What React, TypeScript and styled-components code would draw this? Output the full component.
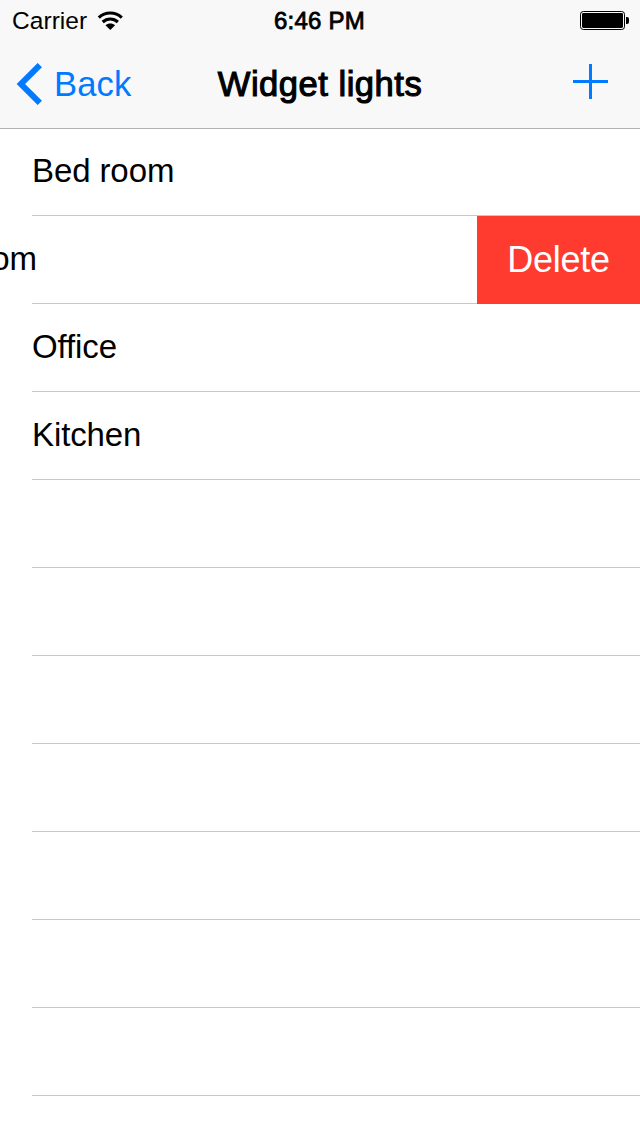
import React from 'react';
import styled, { createGlobalStyle } from 'styled-components';

const GlobalStyle = createGlobalStyle`
  * { box-sizing: border-box; }
  body {
    margin: 0;
    background: #fff;
    color: #000;
    font-family: "Liberation Sans", Arial, sans-serif;
  }
`;

const Screen = styled.div`
  width: 640px;
  height: 1136px;
  overflow: hidden;
  background: #fff;
`;

const Header = styled.header`
  position: relative;
  z-index: 1;
  height: 129px;
  background: #f8f8f8;
  border-bottom: 1px solid #b2b2b2;
`;

const StatusBar = styled.div`
  display: grid;
  grid-template-columns: 1fr auto 1fr;
  align-items: center;
  height: 40px;
  padding: 0 11px 0 12px;
  font-size: 24px;
  line-height: 40px;
`;

const Carrier = styled.div`
  display: flex;
  align-items: center;
  gap: 10px;
  font-size: 24.5px;
  letter-spacing: 0.05px;
  padding-top: 1px;
`;

const Clock = styled.div`
  padding: 1px 2px 0 0;
  letter-spacing: 0.25px;
  -webkit-text-stroke: 0.8px #000;
`;

const BatterySlot = styled.div`
  display: flex;
  justify-content: flex-end;
`;

const NavBar = styled.nav`
  display: grid;
  grid-template-columns: 1fr auto 1fr;
  align-items: center;
  height: 88px;
  padding: 0 32px;
`;

const BackButton = styled.a`
  display: flex;
  align-items: center;
  gap: 11px;
  margin-left: -16px;
  color: #007aff;
  font-size: 34.6px;
  letter-spacing: 0.1px;
`;

const Title = styled.h1`
  margin: 0;
  font-size: 34.6px;
  font-weight: 400;
  letter-spacing: 0.5px;
  -webkit-text-stroke: 1.1px #000;
`;

const AddButton = styled.a`
  display: flex;
  justify-content: flex-end;
  padding-bottom: 6px;
`;

const List = styled.main`
  margin-top: -1px;
`;

const Row = styled.div`
  display: flex;
  height: 88px;
  padding-left: 32px;
  overflow: hidden;
`;

const Cell = styled.div<{ $shift?: number }>`
  flex: 1;
  min-width: 0;
  border-bottom: 1px solid #c8c7cc;
  font-size: 33px;
  line-height: 86px;
  letter-spacing: -0.1px;
  white-space: nowrap;
  text-indent: ${({ $shift = 0 }) => -$shift}px;
`;

const DeleteButton = styled.div`
  width: 163px;
  height: 88px;
  background: #ff3b30;
  color: #fff;
  font-size: 36px;
  line-height: 88px;
  text-align: center;
  letter-spacing: -0.25px;
`;

const WifiIcon = () => (
  <svg width="26" height="20" viewBox="0 0 26 20" fill="none" stroke="#000">
    <path d="M1.8 6.6C8.3 .4 18.3 .4 24.8 6.6" strokeWidth="3.1" />
    <path d="M5.7 11C10.1 7 16.5 7 20.9 11" strokeWidth="3.1" />
    <path d="M13.3 19 8.5 14.3c2.6-2.4 7-2.4 9.6 0z" fill="#000" stroke="none" />
  </svg>
);

const BatteryIcon = () => (
  <svg width="49" height="19" viewBox="0 0 49 19">
    <rect x=".5" y=".5" width="44" height="18" rx="2.8" fill="none" stroke="#000" />
    <rect x="2" y="2" width="41" height="15" rx="1.4" />
    <path d="M46 6h1a2 2 0 0 1 2 2v3a2 2 0 0 1-2 2h-1z" />
  </svg>
);

const ChevronIcon = () => (
  <svg width="27" height="42" viewBox="0 0 27 42" fill="none" stroke="#007aff" strokeWidth="6">
    <path d="M23.8 2.1 4.9 21 23.8 39.9" />
  </svg>
);

const PlusIcon = () => (
  <svg width="35" height="35" viewBox="0 0 35 35" fill="#007aff">
    <path d="M0 16h16V0h3v16h16v3H19v16h-3V19H0z" />
  </svg>
);

type Room = { name: string; swiped?: boolean };

const rooms: Room[] = [
  { name: 'Bed room' },
  { name: 'Living room', swiped: true },
  { name: 'Office' },
  { name: 'Kitchen' },
];

export default function App() {
  return (
    <Screen>
      <GlobalStyle />
      <Header>
        <StatusBar>
          <Carrier>
            Carrier
            <WifiIcon />
          </Carrier>
          <Clock>6:46 PM</Clock>
          <BatterySlot>
            <BatteryIcon />
          </BatterySlot>
        </StatusBar>
        <NavBar>
          <BackButton>
            <ChevronIcon />
            Back
          </BackButton>
          <Title>Widget lights</Title>
          <AddButton aria-label="Add">
            <PlusIcon />
          </AddButton>
        </NavBar>
      </Header>
      <List>
        {rooms.map(({ name, swiped }) => (
          <Row key={name}>
            <Cell $shift={swiped ? 164.5 : 0}>{name}</Cell>
            {swiped && <DeleteButton>Delete</DeleteButton>}
          </Row>
        ))}
        {Array.from({ length: 8 }, (_, i) => (
          <Row key={i}>
            <Cell />
          </Row>
        ))}
      </List>
    </Screen>
  );
}
